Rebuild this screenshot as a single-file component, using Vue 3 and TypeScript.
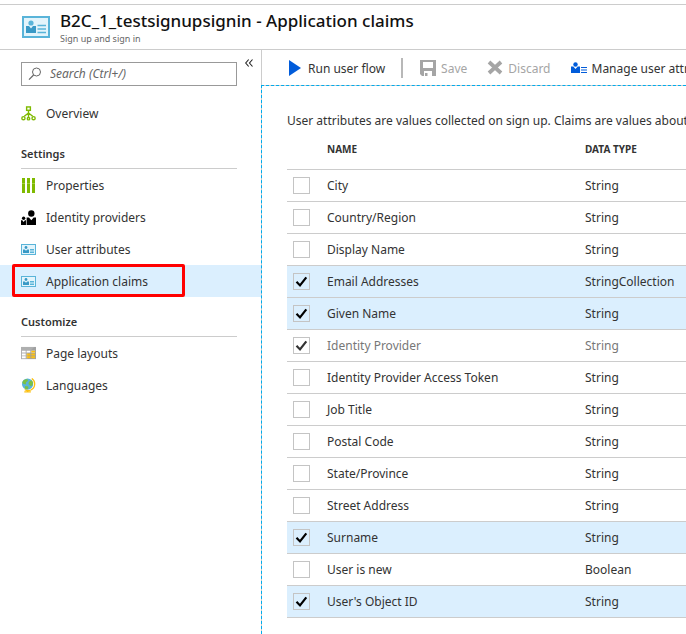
<script setup lang="ts">
import { ref } from 'vue'

interface NavItem {
  label: string
  icon: string
  active?: boolean
}

interface Claim {
  name: string
  type: string
  checked: boolean
  locked?: boolean
}

const search = ref('')

const overview: NavItem = { label: 'Overview', icon: 'overview' }

const sections: { title: string; items: NavItem[] }[] = [
  {
    title: 'Settings',
    items: [
      { label: 'Properties', icon: 'properties' },
      { label: 'Identity providers', icon: 'people' },
      { label: 'User attributes', icon: 'card' },
      { label: 'Application claims', icon: 'card', active: true },
    ],
  },
  {
    title: 'Customize',
    items: [
      { label: 'Page layouts', icon: 'layout' },
      { label: 'Languages', icon: 'globe' },
    ],
  },
]

const claims = ref<Claim[]>([
  { name: 'City', type: 'String', checked: false },
  { name: 'Country/Region', type: 'String', checked: false },
  { name: 'Display Name', type: 'String', checked: false },
  { name: 'Email Addresses', type: 'StringCollection', checked: true },
  { name: 'Given Name', type: 'String', checked: true },
  { name: 'Identity Provider', type: 'String', checked: true, locked: true },
  { name: 'Identity Provider Access Token', type: 'String', checked: false },
  { name: 'Job Title', type: 'String', checked: false },
  { name: 'Postal Code', type: 'String', checked: false },
  { name: 'State/Province', type: 'String', checked: false },
  { name: 'Street Address', type: 'String', checked: false },
  { name: 'Surname', type: 'String', checked: true },
  { name: 'User is new', type: 'Boolean', checked: false },
  { name: "User's Object ID", type: 'String', checked: true },
])
</script>

<template>
  <div class="blade">
    <header class="header">
      <svg class="header-icon" viewBox="0 0 28 22" aria-hidden="true">
        <rect x="0" y="0" width="28" height="22" fill="#59b4d9" />
        <rect x="2" y="2" width="24" height="18" fill="#e3f4fb" />
        <circle cx="9" cy="7" r="2.6" fill="#59b4d9" />
        <path d="M4 10h3l2 2.600L11 10h3v7H4z" fill="#3999c6" />
        <path d="M15.500 9.500h8.500M15.500 13h8.500M15.500 16.500h8.500" stroke="#59b4d9" stroke-width="1.300" />
      </svg>
      <div class="heading">
        <h1>B2C_1_testsignupsignin - Application claims</h1>
        <p>Sign up and sign in</p>
      </div>
    </header>

    <div class="body">
      <aside class="sidebar">
        <div class="search-row">
          <label class="search">
            <svg viewBox="0 0 14 14" aria-hidden="true">
              <circle cx="8.500" cy="5" r="4" fill="none" stroke="#666" />
              <path d="M5.600 8 1 12.600" stroke="#666" stroke-width="1.200" />
            </svg>
            <input v-model="search" type="text" placeholder="Search (Ctrl+/)" aria-label="Search" />
          </label>
          <button class="collapse" type="button" aria-label="Collapse menu">
            <svg viewBox="0 0 8 8" aria-hidden="true">
              <path d="M3.700.5.700 4l3 3.500M7.500.500l-3 3.500 3 3.500" fill="none" stroke="#222" stroke-width="1.100" />
            </svg>
          </button>
        </div>

        <nav>
          <a class="item" href="#">
            <svg viewBox="0 0 16 16" aria-hidden="true">
              <g fill="none" stroke="#7fba00" stroke-width="1.500">
                <rect x="6" y="1" width="4" height="3.600" />
                <path d="M8 5v3.500M8 7.500 3.500 11M8 7.500l4.500 3.500M8 8v4" />
                <circle cx="2.600" cy="13" r="1.700" />
                <circle cx="8" cy="13.500" r="1.300" />
                <circle cx="13.400" cy="13" r="1.700" />
              </g>
            </svg>
            <span>{{ overview.label }}</span>
          </a>
          <section v-for="section in sections" :key="section.title">
            <h2>{{ section.title }}</h2>
            <a
              v-for="item in section.items"
              :key="item.label"
              class="item"
              :class="{ active: item.active }"
              href="#"
            >
              <svg v-if="item.icon === 'properties'" viewBox="0 0 15 15" aria-hidden="true">
                <path d="M1 0h3v15H1zM6 0h3v15H6zM11 0h3v15h-3z" fill="#7fba00" />
                <path d="M1 5h3v1H1zM6 5h3v1H6zM11 5h3v1h-3z" fill="#a3cf3e" />
              </svg>
              <svg v-else-if="item.icon === 'people'" viewBox="0 0 16 16" aria-hidden="true">
                <circle cx="11" cy="3.700" r="3.400" />
                <path d="M6 8h2.500L11 11l2.500-3H16v8H6z" />
                <circle cx="2.800" cy="8.800" r="1.800" />
                <path d="M0 11h1.400l1.400 1.700L4.200 11H5.300v5H0z" />
              </svg>
              <svg v-else-if="item.icon === 'card'" viewBox="0 0 15 15" aria-hidden="true">
                <rect x="0.500" y="2.500" width="14" height="10" fill="#e3f4fb" stroke="#59b4d9" />
                <circle cx="5" cy="5.500" r="1.400" fill="#3999c6" />
                <path d="M2 7.500h1.700L5 8.800l1.300-1.300H8V11H2z" fill="#3999c6" />
                <path d="M9 7.500h4M9 9h4M9 10.500h4" stroke="#59b4d9" />
              </svg>
              <svg v-else-if="item.icon === 'layout'" viewBox="0 0 16 16" aria-hidden="true">
                <path d="M0 1h16v13H0z" fill="#a0a1a2" />
                <path d="M1 5h4v2H1zM6 5h4v2H6zM11 5h4v2h-4zM1 8h4v2H1zM1 11h4v2H1z" fill="#fff" />
                <path d="M11 5h4v2h-4zM6 8h4v2H6zM11 8h4v2h-4zM6 11h4v2H6zM11 11h4v2h-4z" fill="#fcc010" />
                <path d="M0 1h14L7 8v6H0z" fill="#fff" opacity=".15" />
              </svg>
              <svg v-else viewBox="0 0 16 16" aria-hidden="true">
                <path d="M11.500.500c4.500 3 4 10-1 12.300-2.500 1-5 .6-6.500-.6" fill="none" stroke="#fcc010" stroke-width="1.400" />
                <circle cx="7" cy="6.500" r="6" fill="#59b4d9" />
                <path d="M3 2.200 6.500 1l1 2-2 1.500L5 7 2.500 6 1.300 4.500zM8.500 4l3-1.500L12.800 5l-.6 3-2.200.5L8 6.500zM4.500 8.500l3 .5.500 2-2 1.300-2-1.300z" fill="#7cc142" />
                <path d="M6.300 12.500h1.500v1.700h2.700v1.300h-7v-1.300h2.800z" fill="#fcc010" />
              </svg>
              <span>{{ item.label }}</span>
            </a>
          </section>
        </nav>
      </aside>

      <main class="main">
        <div class="toolbar">
          <button class="run" type="button">
            <svg class="play" viewBox="0 0 12 16" aria-hidden="true">
              <path d="M0 0 12 8 0 16z" fill="#015cda" />
            </svg>
            <span>Run user flow</span>
          </button>
          <button class="save" type="button" disabled>
            <svg class="glyph" viewBox="0 0 16 16" aria-hidden="true">
              <path d="M0 0h16v16H2l-2-2zM3 2v6h10V2zM4 11v5h1v-1.500h0V13h2.500v3H12v-5z" fill="#a5a5a5" fill-rule="evenodd" />
            </svg>
            <span>Save</span>
          </button>
          <button class="discard" type="button" disabled>
            <svg class="glyph" viewBox="0 0 16 16" aria-hidden="true">
              <path d="m2 2 12 11M14 2 2 13" stroke="#a5a5a5" stroke-width="3.800" />
            </svg>
            <span>Discard</span>
          </button>
          <button class="manage" type="button">
            <svg class="glyph" viewBox="0 0 16 16" aria-hidden="true">
              <circle cx="4.500" cy="4.500" r="2.200" fill="#015cda" />
              <path d="M0 6.500h2.300L4.500 9l2.200-2.500H9V13H0z" fill="#015cda" />
              <path d="M10 7.500h6M10 10h6M10 12.500h6" stroke="#015cda" stroke-width="1.200" />
            </svg>
            <span>Manage user attributes</span>
          </button>
        </div>

        <div class="content">
          <p class="intro">User attributes are values collected on sign up. Claims are values about the user.</p>
          <table>
            <thead>
              <tr>
                <th class="pick"></th>
                <th class="name">NAME</th>
                <th>DATA TYPE</th>
              </tr>
            </thead>
            <tbody>
              <tr
                v-for="(claim, i) in claims"
                :key="claim.name"
                :class="{ selected: claim.checked && !claim.locked, locked: claim.locked }"
              >
                <td class="pick">
                  <span class="tick">
                    <input :id="`claim-${i}`" v-model="claim.checked" type="checkbox" :disabled="claim.locked" />
                    <svg v-if="claim.checked" viewBox="0 0 17 17" aria-hidden="true">
                      <path d="m3.500 8.800 3.500 3.600 6.300-8" fill="none" stroke="currentColor" stroke-width="2.200" />
                    </svg>
                  </span>
                </td>
                <td><label :for="`claim-${i}`">{{ claim.name }}</label></td>
                <td>{{ claim.type }}</td>
              </tr>
            </tbody>
          </table>
        </div>
      </main>
    </div>
  </div>
</template>

<style>
body {
  margin: 0;
  background: #fff;
  overflow: hidden;
}
</style>

<style scoped>
.blade {
  display: flex;
  flex-direction: column;
  box-sizing: border-box;
  min-height: 100vh;
  padding-top: 4px;
  overflow: hidden;
  font-family: "Noto Sans", "Open Sans", sans-serif;
  font-size: 12px;
  line-height: 16px;
  color: #333;
}

.header {
  display: flex;
  gap: 10px;
  height: 44px;
  padding-left: 22px;
  border-top: 1px solid #ccc;
  border-bottom: 1px solid #ccc;
}

.header-icon {
  width: 28px;
  height: 22px;
  margin-top: 11px;
}

.heading {
  padding-top: 4px;
  white-space: nowrap;
}

h1 {
  margin: 0;
  font-size: 17px;
  font-weight: 500;
  line-height: 24px;
  color: #111;
}

.heading p {
  margin: 0;
  font-size: 9px;
  line-height: 12px;
  color: #666;
}

.body {
  display: flex;
  flex: 1;
}

.sidebar {
  flex: none;
  width: 261px;
}

.search-row {
  display: flex;
  align-items: flex-start;
  gap: 8px;
  padding: 12px 8px 11px 21px;
}

.search {
  display: flex;
  flex: 1;
  align-items: center;
  gap: 8px;
  box-sizing: border-box;
  height: 24px;
  padding: 0 7px 0 6px;
  border: 1px solid #999;
}

.search svg {
  flex: none;
  width: 14px;
  height: 14px;
}

.search input {
  flex: 1;
  min-width: 0;
  padding: 0;
  border: 0;
  outline: 0;
  background: none;
  font: inherit;
  font-style: italic;
}

.search input::placeholder {
  color: #666;
}

.collapse {
  display: flex;
  padding: 0;
  border: 0;
  background: none;
}

.collapse svg {
  width: 8px;
  height: 10px;
  margin-top: -4px;
}

.item {
  position: relative;
  display: flex;
  align-items: center;
  gap: 10px;
  height: 32px;
  padding: 0 21px;
  color: #333;
  text-decoration: none;
}

.item svg {
  width: 15px;
  height: 15px;
}

.item span {
  padding-top: 2px;
}

.item.active {
  background: #dbeffe;
}

.item.active::after {
  content: "";
  position: absolute;
  inset: -1px 76px 0 12px;
  border: 3px solid #f00;
  border-radius: 2px;
}

h2 {
  box-sizing: border-box;
  height: 40px;
  margin: 0 24px 0 21px;
  padding-top: 17px;
  border-bottom: 1px solid #ccc;
  font-size: 11px;
  font-weight: 600;
  line-height: 16px;
}

.main {
  display: flex;
  flex: 1;
  flex-direction: column;
  min-width: 0;
  overflow: hidden;
}

.toolbar {
  display: flex;
  align-items: center;
  height: 35px;
  padding-left: 27px;
  border-left: 1px solid #ccc;
}

.toolbar button {
  display: flex;
  flex: none;
  align-items: center;
  gap: 5px;
  padding: 0;
  border: 0;
  background: none;
  font: inherit;
  color: #333;
}

.toolbar span {
  padding-top: 2px;
}

.toolbar button:disabled {
  color: #a5a5a5;
}

.toolbar .run {
  gap: 7px;
  height: 20px;
  padding-right: 16px;
  border-right: 2px solid #b8b8b8;
}

.toolbar .save {
  margin-left: 17px;
}

.toolbar .discard,
.toolbar .manage {
  margin-left: 20px;
}

.play {
  width: 12px;
  height: 16px;
}

.glyph {
  width: 16px;
  height: 16px;
}

.content {
  flex: 1;
  padding: 27px 0 16px 25px;
  border-top: 1px dashed #00abec;
  border-left: 1px dashed #00abec;
  background: linear-gradient(#fff, #fff) padding-box, #ccc border-box;
}

.intro {
  margin: 0;
  white-space: nowrap;
}

table {
  width: 100%;
  border-collapse: collapse;
  table-layout: fixed;
}

th,
td {
  padding: 0;
  border-bottom: 1px solid #ccc;
  text-align: left;
  vertical-align: middle;
}

th {
  height: 40px;
  padding-top: 12px;
  box-sizing: border-box;
  vertical-align: top;
  font-size: 10px;
  font-weight: 700;
}

td {
  height: 29px;
  padding-top: 2px;
}

th.pick {
  width: 40px;
}

th.name {
  width: 258px;
}

td.pick {
  height: 31px;
  padding: 0 0 0 6px;
}

.selected {
  background: #dbeffe;
}

.locked {
  color: #777;
}

.tick {
  display: grid;
  width: 17px;
  height: 17px;
  color: #000;
}

.locked .tick {
  color: #333;
}

.tick input,
.tick svg {
  grid-area: 1 / 1;
  width: 17px;
  height: 17px;
}

.tick input {
  appearance: none;
  box-sizing: border-box;
  margin: 0;
  border: 1px solid #c4c4c4;
}

.tick svg {
  pointer-events: none;
}
</style>
